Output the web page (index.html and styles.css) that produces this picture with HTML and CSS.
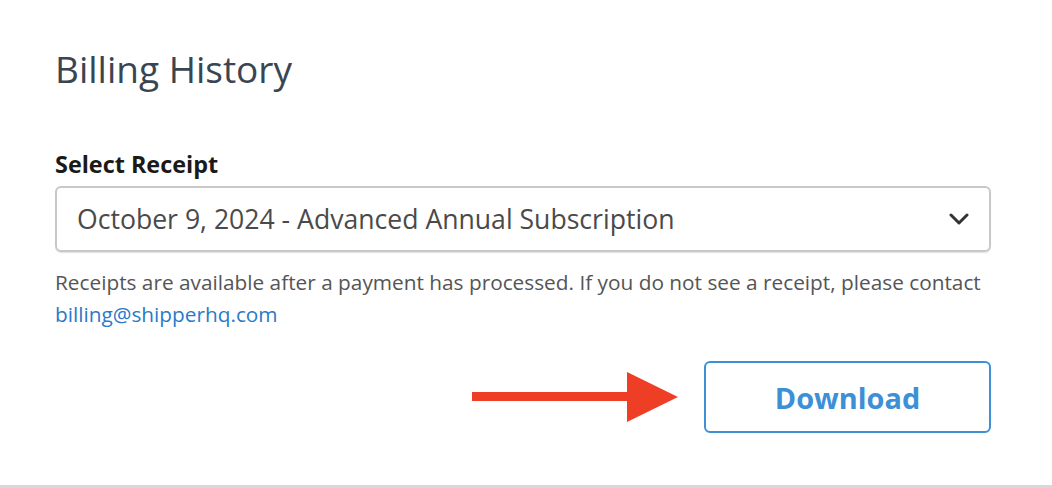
FILE: index.html
```html
<!DOCTYPE html>
<html>
<head>
<meta charset="utf-8">
<link rel="stylesheet" href="styles.css">
</head>
<body>
<div class="panel">
  <h1 class="title">Billing History</h1>
  <div class="field">
    <label class="label">Select Receipt</label>
    <div class="select">
      <span class="select-text">October 9, 2024 - Advanced Annual Subscription</span>
      <svg class="chevron" width="20" height="12" viewBox="0 0 20 12"><path d="M2 2 L10 10 L18 2" fill="none" stroke="#333" stroke-width="3" stroke-linecap="round" stroke-linejoin="round"/></svg>
    </div>
    <p class="help">Receipts are available after a payment has processed. If you do not see a receipt, please contact <a class="link" href="#">billing@shipperhq.com</a></p>
  </div>
  <div class="actions">
    <svg class="arrow" width="206" height="50" viewBox="0 0 206 50"><rect x="0" y="20" width="160" height="9" fill="#ee3e26"/><polygon points="155,0 206,25 155,50" fill="#ee3e26"/></svg>
    <button class="btn">Download</button>
  </div>
</div>
</body>
</html>
```
FILE: styles.css
```css
html, body {
  margin: 0;
  padding: 0;
  background: #fff;
}
body {
  font-family: "Open Sans", "Lato", sans-serif;
  width: 1052px;
  height: 488px;
  overflow: hidden;
}
.panel {
  height: 485px;
  border-bottom: 3px solid #d8d8d8;
  padding: 0 61px 0 55px;
}
.title {
  margin: 0;
  padding-top: 45px;
  font-size: 37px;
  font-weight: 400;
  color: #3a4552;
  line-height: 48px;
}
.field {
  margin-top: 56px;
}
.label {
  display: block;
  font-size: 23.4px;
  font-weight: 700;
  color: #1a1a1a;
  line-height: 30px;
}
.select {
  margin-top: 7px;
  height: 62px;
  border: 2px solid #c8c8c8;
  border-radius: 6px;
  box-shadow: 0 1px 1px rgba(0,0,0,0.12);
  display: flex;
  align-items: center;
  justify-content: space-between;
  padding: 0 20px 0 20px;
}
.select-text {
  font-size: 26.6px;
  color: #4a4a4a;
}
.chevron {
  display: block;
}
.help {
  margin: 14px 0 0 0;
  font-size: 20.8px;
  line-height: 32px;
  color: #555;
}
.link {
  color: #2a7ac8;
  text-decoration: none;
}
.actions {
  margin-top: 31px;
  display: flex;
  justify-content: flex-end;
  align-items: center;
  gap: 26px;
}
.arrow {
  display: block;
}
.btn {
  width: 287px;
  height: 72px;
  border: 2px solid #3d8fd6;
  border-radius: 6px;
  background: #fff;
  color: #3d8fd6;
  font-family: inherit;
  font-size: 28.9px;
  font-weight: 700;
}
```
